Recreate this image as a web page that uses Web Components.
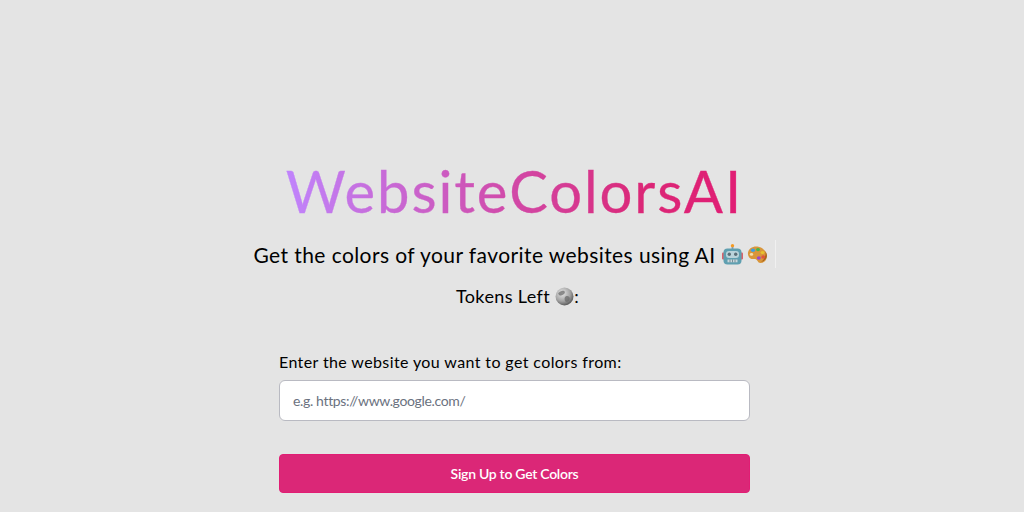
<!DOCTYPE html>
<html lang="en"><head><meta charset="utf-8"><title>WebsiteColorsAI</title>
<style>html,body{margin:0;height:100%;background:#e4e4e4;overflow:hidden}</style></head>
<body>
<template id="t-page"><style>
:host{display:flex;flex-direction:column;align-items:center;box-sizing:border-box;width:1024px;height:512px;overflow:hidden;padding:155px 0 0 5px;background:#e4e4e4;color:#000;font-family:Lato,"Noto Sans",sans-serif}
</style><slot></slot></template>

<template id="t-title"><style>
:host{display:block;font-size:58px;line-height:72px;font-weight:400;height:72px}
h1{margin:0;font:inherit;letter-spacing:1.9px;-webkit-text-stroke:.3px transparent;background:linear-gradient(90deg,#c084fc,#db2777 78%,#e11d74);-webkit-background-clip:text;background-clip:text;color:transparent}
</style><h1><slot></slot></h1></template>

<template id="t-tagline"><style>
:host{display:flex;align-items:center;height:32px;margin-top:11px;font-size:21px;letter-spacing:.42px;white-space:nowrap}
.c{width:1px;height:28px;background:#f0f0f0;margin-left:7px}
.i{display:flex;gap:4px;margin-left:6px}
</style><slot></slot><span class="i"><slot name="icons"></slot></span><span class="c"></span></template>

<template id="t-tokens"><style>
:host{display:flex;align-items:center;height:28px;margin-top:12px;padding-left:6px;font-size:18px;letter-spacing:.38px;white-space:nowrap}
.i{display:flex;margin:0 0 0 5px}
</style><slot></slot><span class="i"><slot name="icon"></slot></span><slot name="after"></slot></template>

<template id="t-form"><style>
:host{display:flex;flex-direction:column;width:471px;margin-top:40px}
label{font-size:16px;line-height:24px;letter-spacing:.39px;color:#000;margin-bottom:6px;white-space:nowrap}
input{box-sizing:border-box;width:100%;height:41px;border:1px solid #b9bac2;border-radius:6px;background:#fff;padding:0 13px;font:14px/20px Lato,"Noto Sans",sans-serif;letter-spacing:-.35px;outline:0}
input::placeholder{color:#6b7280;opacity:1}
button{box-sizing:border-box;width:100%;height:39px;margin-top:33px;border:1px solid #e11d74;border-radius:4px;background:#db2777;color:#fff;font:600 14px/20px Lato,"Noto Sans",sans-serif;letter-spacing:-.28px;cursor:pointer}
</style><label for="u"><slot name="label"></slot></label><input id="u" type="text" placeholder="e.g. https://www.google.com/"><button type="button"><slot name="action"></slot></button></template>

<script>
function def(tag,id){customElements.define(tag,class extends HTMLElement{constructor(){super();this.attachShadow({mode:'open'}).appendChild(document.getElementById(id).content.cloneNode(true));}});}
def('wc-page','t-page');def('wc-title','t-title');def('wc-tagline','t-tagline');def('wc-tokens','t-tokens');def('wc-form','t-form');
</script>

<wc-page>
<wc-title>WebsiteColorsAI</wc-title>
<wc-tagline>Get the colors of your favorite websites using AI
<svg slot="icons" width="21" height="21" viewBox="0 0 21 21" role="img" aria-label="robot"><circle cx="10.5" cy="1.8" r="1.7" fill="#f59a23"/><rect x="9.6" y="3" width="1.8" height="3" fill="#8a9aa3"/><rect x="0" y="8.500" width="3" height="7" rx="1" fill="#d9606a"/><rect x="18" y="8.500" width="3" height="7" rx="1" fill="#d9606a"/><rect x="1.500" y="4.500" width="18" height="16" rx="4" fill="#5f9fb0"/><rect x="4" y="7" width="13" height="7" rx="3" fill="#b9d3da"/><circle cx="7.300" cy="10.300" r="1.700" fill="#5b6f78"/><circle cx="13.700" cy="10.300" r="1.700" fill="#5b6f78"/><path d="M5.500 15.500h10v2.800h-10z" fill="#c9d7dc"/><path d="M8 15.500v2.800M10.500 15.500v2.800M13 15.500v2.800" stroke="#54707a" stroke-width=".7"/></svg>
<svg slot="icons" width="21" height="21" viewBox="0 0 21 21" role="img" aria-label="palette"><path d="M1 8.5C1.8 4.2 6 2 10.5 2.6c5 .7 9.6 5 9.4 9.6-.2 4.3-3.2 7-6.6 6.8-2.6-.2-2.6-2.8-4.4-3.7-2.1-1-3.600 .6-5.400-.8C1.500 13.300.6 10.800 1 8.500z" fill="#d9963a"/><path d="M14 18c3-.6 5.700-3 5.900-5.800.1-1.700-.5-3.400-1.600-4.900 1 3.700-.8 8.200-4.300 10.700z" fill="#a8641d"/><ellipse cx="6" cy="6.300" rx="2.100" ry="1.700" fill="#3f9fe0"/><ellipse cx="11" cy="5.600" rx="2" ry="1.600" fill="#45b84a"/><ellipse cx="15.500" cy="8.500" rx="1.900" ry="1.600" fill="#e8c22c"/><ellipse cx="16.200" cy="13" rx="1.900" ry="1.700" fill="#e0533c"/><ellipse cx="11.800" cy="14" rx="2" ry="1.800" fill="#9a48c9"/><ellipse cx="4.500" cy="10.400" rx="1.700" ry="1.300" fill="#f4dfb0"/></svg>
</wc-tagline>
<wc-tokens>Tokens Left<svg slot="icon" width="19" height="19" viewBox="0 0 18 18" role="img" aria-label="moon"><defs><radialGradient id="m" cx=".38" cy=".32" r=".8"><stop offset="0" stop-color="#e6e6e6"/><stop offset=".55" stop-color="#a3a3a3"/><stop offset="1" stop-color="#3d3d3d"/></radialGradient></defs><circle cx="9" cy="9" r="8.500" fill="url(#m)"/><path d="M3 6c2-2 4-3 6-2 1 1 0 3-2 3.500S4 9 3 6zM10 9c2-1 4 0 4 2s-2 3.500-3.500 3-2-4-.5-5z" fill="#666" opacity=".7"/></svg><span slot="after">:</span></wc-tokens>
<wc-form><span slot="label">Enter the website you want to get colors from:</span><span slot="action">Sign Up to Get Colors</span></wc-form>
</wc-page>
</body></html>
